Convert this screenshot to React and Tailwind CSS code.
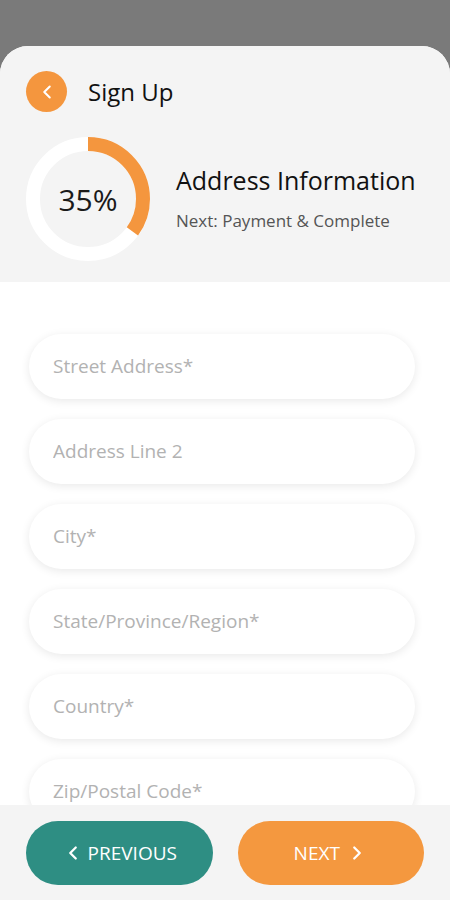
import React from "react";
import { ChevronLeft, ChevronRight } from "lucide-react";

const fields = [
  "Street Address*",
  "Address Line 2",
  "City*",
  "State/Province/Region*",
  "Country*",
  "Zip/Postal Code*",
];

const ProgressRing = ({ percent }) => {
  const r = 55;
  const c = 2 * Math.PI * r;
  return (
    <div className="relative w-[124px] h-[124px] shrink-0">
      <svg width="124" height="124" viewBox="0 0 124 124" className="-rotate-90">
        <circle cx="62" cy="62" r={r} fill="none" stroke="#ffffff" strokeWidth="14" />
        <circle
          cx="62"
          cy="62"
          r={r}
          fill="none"
          stroke="#f4963e"
          strokeWidth="14"
          strokeDasharray={`${(c * percent) / 100} ${c}`}
        />
      </svg>
      <div className="absolute inset-0 flex items-center justify-center text-[30px] text-[#1a1a1a]">
        {percent}%
      </div>
    </div>
  );
};

const App = () => {
  return (
    <div
      className="h-[900px] w-[450px] flex flex-col bg-[#7a7a7a] overflow-hidden"
      style={{ fontFamily: '"Open Sans", "Liberation Sans", sans-serif' }}
    >
      <div className="h-[46px] shrink-0" />
      <div className="flex-1 flex flex-col rounded-t-[28px] bg-white overflow-hidden">
        {/* header */}
        <div className="h-[236px] shrink-0 bg-[#f4f4f4] px-[26px] pt-[25px]">
          <div className="flex items-center gap-[21px]">
            <button className="w-[41px] h-[41px] rounded-full bg-[#f4963e] flex items-center justify-center text-white">
              <ChevronLeft size={22} strokeWidth={2.25} />
            </button>
            <h1 className="text-[24px] text-[#111]">Sign Up</h1>
          </div>
          <div className="flex items-center gap-[26px] mt-[25px]">
            <ProgressRing percent={35} />
            <div className="flex flex-col">
              <h2 className="text-[25px] text-[#111] leading-tight">Address Information</h2>
              <p className="text-[17px] text-[#555] mt-[12px]">Next: Payment &amp; Complete</p>
            </div>
          </div>
        </div>

        {/* fields */}
        <div className="flex-1 overflow-hidden pl-[29px] pr-[35px] pt-[52px] flex flex-col gap-[20px]">
          {fields.map((f) => (
            <div
              key={f}
              className="h-[65px] shrink-0 rounded-full bg-white shadow-[0_2px_10px_rgba(0,0,0,0.09)] flex items-center px-[24px]"
            >
              <input
                type="text"
                placeholder={f}
                className="w-full outline-none bg-transparent text-[19px] placeholder:text-[#b2b2b2]"
              />
            </div>
          ))}
        </div>

        {/* footer */}
        <div className="h-[95px] shrink-0 bg-[#f4f4f4] flex items-start pt-[16px] px-[26px] gap-[25px]">
          <button className="flex-1 h-[64px] rounded-full bg-[#2e8e83] text-white flex items-center justify-center gap-[4px] text-[19px] font-medium">
            <ChevronLeft size={22} strokeWidth={2.5} />
            PREVIOUS
          </button>
          <button className="flex-1 h-[64px] rounded-full bg-[#f4983f] text-white flex items-center justify-center gap-[6px] text-[19px] font-medium">
            NEXT
            <ChevronRight size={22} strokeWidth={2.5} />
          </button>
        </div>
      </div>
    </div>
  );
};

export default App;
